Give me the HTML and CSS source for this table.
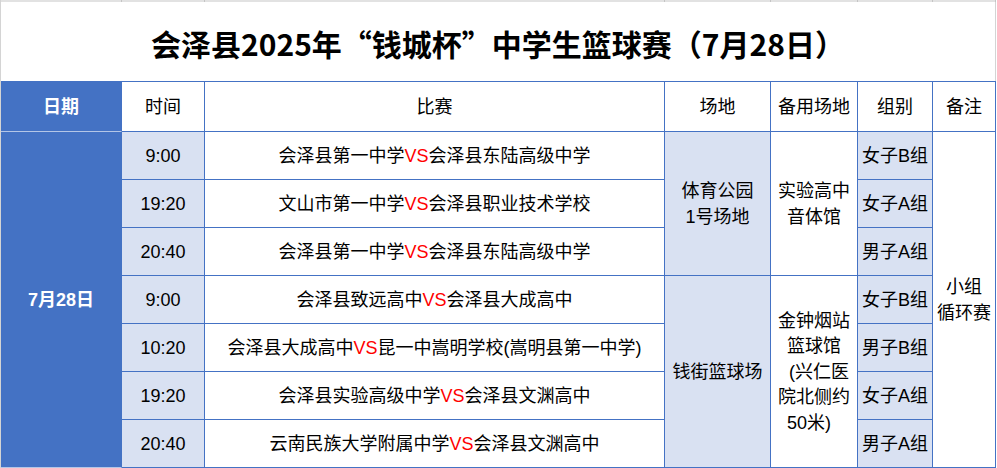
FILE: index.html
```html
<!DOCTYPE html>
<html lang="zh-CN">
<head>
<meta charset="utf-8">
<title>会泽县2025年“钱城杯”中学生篮球赛</title>
<link rel="stylesheet" href="styles.css">
</head>
<body>
<div class="sheet">
  <div class="gridlines">
    <span></span><span></span><span></span><span></span><span></span><span></span><span></span>
  </div>
  <div class="title">会泽县2025年“钱城杯”中学生篮球赛（7月28日）</div>
  <div class="schedule">
    <div class="cell head date">日期</div>
    <div class="cell head">时间</div>
    <div class="cell head">比赛</div>
    <div class="cell head">场地</div>
    <div class="cell head">备用场地</div>
    <div class="cell head">组别</div>
    <div class="cell head">备注</div>

    <div class="cell date date-body">7月28日</div>
    <div class="cell shade">9:00</div>
    <div class="cell">会泽县第一中学<span class="vs">VS</span>会泽县东陆高级中学</div>
    <div class="cell shade span3 multi">体育公园<br>1号场地</div>
    <div class="cell span3 multi">实验高中<br>音体馆</div>
    <div class="cell shade">女子B组</div>
    <div class="cell span7 multi">小组<br>循环赛</div>

    <div class="cell shade">19:20</div>
    <div class="cell">文山市第一中学<span class="vs">VS</span>会泽县职业技术学校</div>
    <div class="cell shade">女子A组</div>

    <div class="cell shade">20:40</div>
    <div class="cell">会泽县第一中学<span class="vs">VS</span>会泽县东陆高级中学</div>
    <div class="cell shade">男子A组</div>

    <div class="cell shade">9:00</div>
    <div class="cell">会泽县致远高中<span class="vs">VS</span>会泽县大成高中</div>
    <div class="cell shade span4">钱街篮球场</div>
    <div class="cell span4 multi">金钟烟站<br>篮球馆<br>&nbsp;&nbsp;(兴仁医<br>院北侧约<br>50米)&nbsp;&nbsp;</div>
    <div class="cell shade">女子B组</div>

    <div class="cell shade">10:20</div>
    <div class="cell">会泽县大成高中<span class="vs">VS</span>昆一中嵩明学校(嵩明县第一中学)</div>
    <div class="cell shade">男子B组</div>

    <div class="cell shade">19:20</div>
    <div class="cell">会泽县实验高级中学<span class="vs">VS</span>会泽县文渊高中</div>
    <div class="cell shade">女子A组</div>

    <div class="cell shade">20:40</div>
    <div class="cell">云南民族大学附属中学<span class="vs">VS</span>会泽县文渊高中</div>
    <div class="cell shade">男子A组</div>
  </div>
</div>
</body>
</html>
```

FILE: styles.css
```css
* {
  box-sizing: border-box;
}

html, body {
  margin: 0;
  padding: 0;
  background: #ffffff;
}

body {
  font-family: "Liberation Sans", "Noto Sans CJK SC", sans-serif;
  color: #000000;
}

.sheet {
  width: 996px;
  border-left: 1px solid #d4d4d4;
}

.gridlines {
  display: grid;
  grid-template-columns: 121px 83px 460px 106px 87px 75px 63px;
  height: 2px;
  background: #e2e2e2;
}

.gridlines span {
  border-right: 1px solid #c4c4c4;
}

.title {
  height: 79px;
  width: 995px;
  border-right: 1px solid #d4d4d4;
  display: flex;
  align-items: center;
  justify-content: center;
  padding-top: 3px;
  font-family: "Noto Sans CJK SC", sans-serif;
  font-weight: 700;
  font-size: 30px;
  letter-spacing: 0;
}

.schedule {
  display: grid;
  width: 995px;
  grid-template-columns: 121px 83px 460px 106px 87px 75px 63px;
  grid-template-rows: 50px repeat(7, 48px);
  border-top: 1px solid #4472c4;
}

.cell {
  display: flex;
  align-items: center;
  justify-content: center;
  text-align: center;
  border-right: 1px solid #4472c4;
  border-bottom: 1px solid #4472c4;
  font-size: 18px;
  line-height: 25.6px;
  white-space: nowrap;
  padding-top: 2px;
}

.head {
  padding-top: 3px;
}

.date {
  background: #4472c4;
  color: #ffffff;
  font-weight: 700;
  border-bottom-color: #b4c6e7;
}

.date-body {
  grid-row: span 7;
}

.shade {
  background: #d9e1f2;
}

.span3 {
  grid-row: span 3;
}

.span4 {
  grid-row: span 4;
}

.span7 {
  grid-row: span 7;
}

.vs {
  color: #ff0000;
}
```
